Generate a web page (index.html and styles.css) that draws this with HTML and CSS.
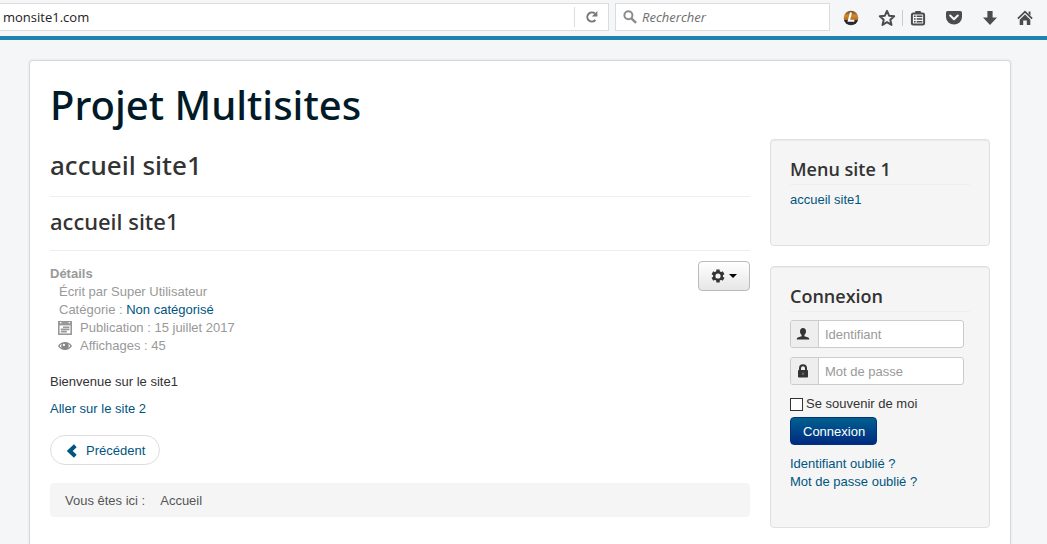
FILE: index.html
```html
<!DOCTYPE html>
<html lang="fr">
<head>
    <meta charset="UTF-8">
    <meta name="viewport" content="width=device-width, initial-scale=1.0">
    <title>accueil site1</title>
    <link rel="stylesheet" href="styles.css">
</head>
<body>
    <div class="toolbar">
        <div class="url-box">
            <input type="text" class="url-input" value="monsite1.com" aria-label="Adresse">
            <button type="button" class="reload-btn" aria-label="Actualiser">
                <svg width="14" height="14" viewBox="0 0 14 14"><path d="M10.4 10A4.6 4.6 0 1 1 9.8 3.4" fill="none" stroke="#777" stroke-width="2"/><path d="M12.4 1v5.6H6.8z" fill="#777"/></svg>
            </button>
        </div>
        <div class="search-box">
            <svg width="14" height="14" viewBox="0 0 14 14"><circle cx="5.4" cy="5.2" r="4" fill="none" stroke="#8c8c8c" stroke-width="2"/><path d="M8.3 8.3l4.8 4.6" stroke="#8c8c8c" stroke-width="2.4"/></svg>
            <input type="search" class="search-input" placeholder="Rechercher" aria-label="Rechercher">
        </div>
        <div class="toolbar-icons">
            <button type="button" aria-label="Extension">
                <svg width="16" height="16" viewBox="0 0 16 16"><defs><linearGradient id="ball" x1="0" y1="0" x2="0" y2="1"><stop offset="0" stop-color="#6b4a2a"/><stop offset=".35" stop-color="#d08a35"/><stop offset=".62" stop-color="#b06a1c"/><stop offset=".68" stop-color="#1c1c24"/><stop offset="1" stop-color="#34343c"/></linearGradient></defs><circle cx="8" cy="8" r="7.3" fill="url(#ball)"/><path d="M8 2.6L5.8 10.8h5.6" fill="none" stroke="#fff" stroke-width="2"/></svg>
            </button>
            <button type="button" aria-label="Marque-page">
                <svg width="18" height="18" viewBox="0 0 18 18"><path d="M9 1.9l2.1 4.8 5.1.5-3.9 3.500 1.200 5.200L9 13.200l-4.500 2.700 1.200-5.200-3.900-3.500 5.100-.5z" fill="none" stroke="#4c4c4c" stroke-width="2" stroke-linejoin="round"/></svg>
            </button>
            <button type="button" class="list-btn" aria-label="Liste des marque-pages">
                <svg width="16" height="16" viewBox="0 0 16 16"><path d="M5 3V2.2Q5 1 6.2 1h3.6Q11 1 11 2.2V3" fill="#4c4c4c"/><rect x="1.900" y="3.400" width="12.200" height="11" rx="1.500" fill="none" stroke="#4c4c4c" stroke-width="2"/><path d="M4 6.300h1.600M4 9h1.600M4 11.700h1.600M6.700 6.300h5.600M6.700 9h5.600M6.700 11.700h5.600" stroke="#4c4c4c" stroke-width="1.500"/></svg>
            </button>
            <button type="button" aria-label="Pocket">
                <svg width="18" height="16" viewBox="0 0 18 16"><path d="M2.600 1h12.800Q17 1 17 2.600V7a8 7.600 0 0 1-16 0V2.600Q1 1 2.600 1z" fill="#4c4c4c"/><path d="M5.200 5.500L9 9.200l3.800-3.700" fill="none" stroke="#f5f6f7" stroke-width="2.100" stroke-linecap="round" stroke-linejoin="round"/></svg>
            </button>
            <button type="button" aria-label="Téléchargements">
                <svg width="16" height="16" viewBox="0 0 16 16"><path d="M5.400 1h5.200v6.400h4.400L8 15 1 7.400h4.400z" fill="#4c4c4c"/></svg>
            </button>
            <button type="button" aria-label="Accueil">
                <svg width="16" height="16" viewBox="0 0 16 16"><path d="M.900 8.600L8 1.700l7.100 6.900" fill="none" stroke="#4c4c4c" stroke-width="1.800"/><path d="M11.600 1.600h1.900v4l-1.900-1.800zM8 4.600l5.300 5.200V15H9.800v-4.600H6.200V15H2.700V9.800z" fill="#4c4c4c"/></svg>
            </button>
        </div>
    </div>

    <div class="page">
        <div class="container">
            <header>
                <a href="#" class="site-title">Projet Multisites</a>
            </header>
            <div class="row">
                <main>
                    <h1 class="page-header">accueil site1</h1>
                    <h2 class="item-header">accueil site1</h2>
                    <div class="article-top">
                        <dl class="article-info">
                            <dt>Détails</dt>
                            <dd>Écrit par Super Utilisateur</dd>
                            <dd>Catégorie : <a href="#">Non catégorisé</a></dd>
                            <dd class="with-icon">
                                <svg width="14" height="14" viewBox="0 0 14 14"><path d="M0 0h14v14H0z" fill="#999"/><path d="M1.6 4.4h10.8v8H1.6z" fill="#fff"/><path d="M2 1.6h1.4M10.6 1.6H12" stroke="#fff" stroke-width="1.2"/><path d="M5 6.2h6.4M2.8 8.4h8.6M2.8 10.6h6" stroke="#999" stroke-width="1.6"/></svg>
                                Publication : 15 juillet 2017
                            </dd>
                            <dd class="with-icon">
                                <svg width="14" height="14" viewBox="0 0 14 14"><path d="M0 7Q2.800 2.900 7 2.900T14 7q-2.800 4.100-7 4.100T0 7z" fill="#888"/><path d="M1.700 7Q2.400 5.700 3.700 5.100a4 4 0 0 0 0 3.800Q2.400 8.300 1.700 7zM12.300 7Q11.600 5.700 10.300 5.100a4 4 0 0 1 0 3.800Q11.600 8.300 12.300 7z" fill="#fff"/><circle cx="5.900" cy="5.900" r="1.100" fill="#fff"/></svg>
                                Affichages : 45
                            </dd>
                        </dl>
                        <button type="button" class="btn-tools" aria-label="Outils">
                            <svg width="14" height="14" viewBox="0 0 14 14"><g fill="#333"><circle cx="7" cy="7" r="5"/><path d="M5.300.500h3.400v13H5.300z"/><path d="M5.300.500h3.400v13H5.300z" transform="rotate(60 7 7)"/><path d="M5.300.500h3.400v13H5.300z" transform="rotate(120 7 7)"/></g><circle cx="7" cy="7" r="2.600" fill="#f4f4f4"/></svg>
                            <span class="caret"></span>
                        </button>
                    </div>
                    <p>Bienvenue sur le site1</p>
                    <p><a href="#">Aller sur le site 2</a></p>
                    <nav class="pager">
                        <a href="#">
                            <svg width="12" height="14" viewBox="0 0 12 14"><path d="M9.300 1.700L3.700 7l5.600 5.300" fill="none" stroke="#005580" stroke-width="4"/></svg>
                            Précédent
                        </a>
                    </nav>
                    <div class="breadcrumb">
                        <span>Vous êtes ici :</span>
                        <span>Accueil</span>
                    </div>
                </main>
                <aside>
                    <div class="well">
                        <h3>Menu site 1</h3>
                        <ul class="links">
                            <li><a href="#">accueil site1</a></li>
                        </ul>
                    </div>
                    <div class="well">
                        <h3>Connexion</h3>
                        <form class="login-form">
                            <div class="input-group">
                                <label for="username" aria-label="Identifiant">
                                    <svg width="14" height="14" viewBox="0 0 14 14"><path d="M7 1c2 0 3 1.300 3 3.200 0 1.600-.7 3-1.600 3.800v1.200l3.900 1.400q.9.400 1 1.900H.7q.1-1.500 1-1.900l3.900-1.400V8C4.700 7.200 4 5.800 4 4.200 4 2.300 5 1 7 1z" fill="#333"/></svg>
                                </label>
                                <input type="text" id="username" placeholder="Identifiant">
                            </div>
                            <div class="input-group">
                                <label for="password" aria-label="Mot de passe">
                                    <svg width="14" height="14" viewBox="0 0 14 14"><path d="M4 7V4.200a3 3 0 0 1 6 0V7" fill="none" stroke="#333" stroke-width="2"/><rect x="2" y="6" width="10" height="7.500" rx=".8" fill="#333"/><path d="M6.400 8.800h1.200v2H6.400z" fill="#999"/></svg>
                                </label>
                                <input type="password" id="password" placeholder="Mot de passe">
                            </div>
                            <div class="remember">
                                <input type="checkbox" id="remember">
                                <label for="remember">Se souvenir de moi</label>
                            </div>
                            <button type="submit" class="btn-primary">Connexion</button>
                        </form>
                        <ul class="links">
                            <li><a href="#">Identifiant oublié ?</a></li>
                            <li><a href="#">Mot de passe oublié ?</a></li>
                        </ul>
                    </div>
                </aside>
            </div>
        </div>
    </div>
</body>
</html>
```
FILE: styles.css
```css
:root {
    --link-color: #005580;
    --text-color: #333;
    --muted-color: #999;
    --bar-color: #f5f6f7;
    --font-main: "Liberation Sans", Arial, sans-serif;
    --font-title: "Open Sans", sans-serif;
    --font-heading: "Noto Sans", "Open Sans", sans-serif;
}
* { box-sizing: border-box; }
body { margin: 0; min-height: 100vh; display: flex; flex-direction: column; font-family: var(--font-main); font-size: 13px; line-height: 18px; color: var(--text-color); background-color: #f4f6f7; }
a { color: var(--link-color); text-decoration: none; }
a:hover { text-decoration: underline; }
button, input { font: inherit; color: inherit; }
button { cursor: pointer; }
svg { display: block; flex: none; }
h1, h2, h3 { margin: 0; }

/* browser bar */
.toolbar { display: flex; align-items: center; height: 36px; padding: 0 14px 3px 0; background-color: var(--bar-color); font-family: var(--font-title); }
.toolbar button { display: flex; padding: 0; border: 0; background: none; }
.toolbar input { min-width: 0; border: 0; padding: 0; background: none; outline: none; }
.url-box, .search-box { display: flex; align-items: center; height: 28px; margin-top: 1px; background-color: #fff; border: 1px solid #dcdcdc; }
.url-box { flex: 1; border-left: 0; margin-right: 6px; }
.toolbar .url-input { flex: 1; padding-left: 3px; color: #222; }
.toolbar .reload-btn { height: 20px; width: 34px; align-items: center; justify-content: center; border-left: 1px solid #ddd; }
.search-box { width: 215px; padding-left: 7px; gap: 5px; }
.search-input { flex: 1; font-style: italic; }
.search-input::placeholder { color: #6e6e6e; opacity: 1; }
.toolbar-icons { display: flex; align-items: center; gap: 19px; margin-left: 13px; padding-top: 2px; }
.toolbar .list-btn { border-left: 1px solid #ccc; padding-left: 7px; margin-left: -13px; }

/* page */
.page { flex: 1; display: flex; border-top: 4px solid #1f82b0; padding: 20px 36px 0 29px; }
.container { flex: 1; background-color: #fff; border: 1px solid #d4d8dd; border-bottom: 0; border-radius: 4px 4px 0 0; padding: 20px 20px 16px; box-shadow: 0 0 3px rgba(0, 0, 0, 0.08); }
header { margin-bottom: 10px; }
.site-title { display: block; font-family: var(--font-heading); font-size: 40px; font-weight: 500; line-height: 48px; color: #001a27; }
.row { display: flex; align-items: flex-start; gap: 20px; }
main { flex: 1; min-width: 0; }
aside { width: 220px; display: flex; flex-direction: column; gap: 20px; }

.page-header, .item-header { font-family: var(--font-heading); line-height: 36px; font-weight: 500; border-bottom: 1px solid #eee; }
.page-header { font-size: 26px; padding: 8px 0 13px; }
.item-header { font-size: 22px; padding: 6px 0 11px; }
.article-top { display: flex; justify-content: space-between; align-items: flex-start; padding-top: 10px; margin-bottom: 18px; }
.article-info { margin: 4px 0 0; color: var(--muted-color); }
.article-info dt { font-weight: bold; }
.article-info dd { margin: 0 0 0 9px; }
.article-info .with-icon { display: flex; align-items: center; gap: 8px; margin-left: 8px; }
.btn-tools { display: flex; align-items: center; justify-content: center; gap: 4px; width: 52px; height: 30px; padding: 0; border: 1px solid #bbb; border-radius: 4px; background: linear-gradient(#fff, #e6e6e6); }
.caret { border: 4px solid transparent; border-top-color: #000; border-bottom: 0; }
p { margin: 0 0 9px; }
.pager { display: flex; margin: 17px 0 18px; }
.pager a { display: flex; align-items: center; gap: 8px; height: 30px; padding: 1px 14px 0 15px; border: 1px solid #ddd; border-radius: 15px; }
.breadcrumb { display: flex; gap: 15px; padding: 9px 15px 7px; background-color: #f5f5f5; border-radius: 4px; color: #555; }

/* sidebar */
.well { background-color: #f5f5f5; border: 1px solid #e0e0e0; border-radius: 4px; padding: 20px 19px 18px; box-shadow: inset 0 1px 1px rgba(0, 0, 0, 0.05); }
.well h3 { font-family: var(--font-title); font-size: 18px; font-weight: 600; line-height: 18px; padding-bottom: 6px; margin-bottom: 6px; border-bottom: 1px solid #eee; }
.links { list-style: none; padding: 0; margin: 0 0 18px; }
.login-form { display: flex; flex-direction: column; align-items: flex-start; padding-top: 2px; margin-bottom: 10px; }
.input-group { display: flex; width: 174px; height: 28px; margin-bottom: 9px; border: 1px solid #ccc; border-radius: 3px; background-color: #fff; overflow: hidden; }
.input-group label { display: flex; align-items: center; justify-content: center; width: 28px; padding-right: 3px; background-color: #eee; border-right: 1px solid #ccc; }
.input-group input { flex: 1; min-width: 0; border: 0; padding: 2px 6px 0; background: none; }
.input-group input::placeholder { color: var(--muted-color); opacity: 1; }
.remember { display: flex; align-items: center; gap: 3px; padding-top: 1px; margin-bottom: 4px; }
.remember input { appearance: none; width: 13px; height: 13px; margin: 0; border: 1px solid #333; background-color: #fff; }
.remember input:checked { background-color: var(--link-color); }
.btn-primary { height: 28px; padding: 1px 11px 0 12px; border: 1px solid #00337a; border-radius: 4px; background: linear-gradient(#00608f, #002a80); color: #fff; }
```
